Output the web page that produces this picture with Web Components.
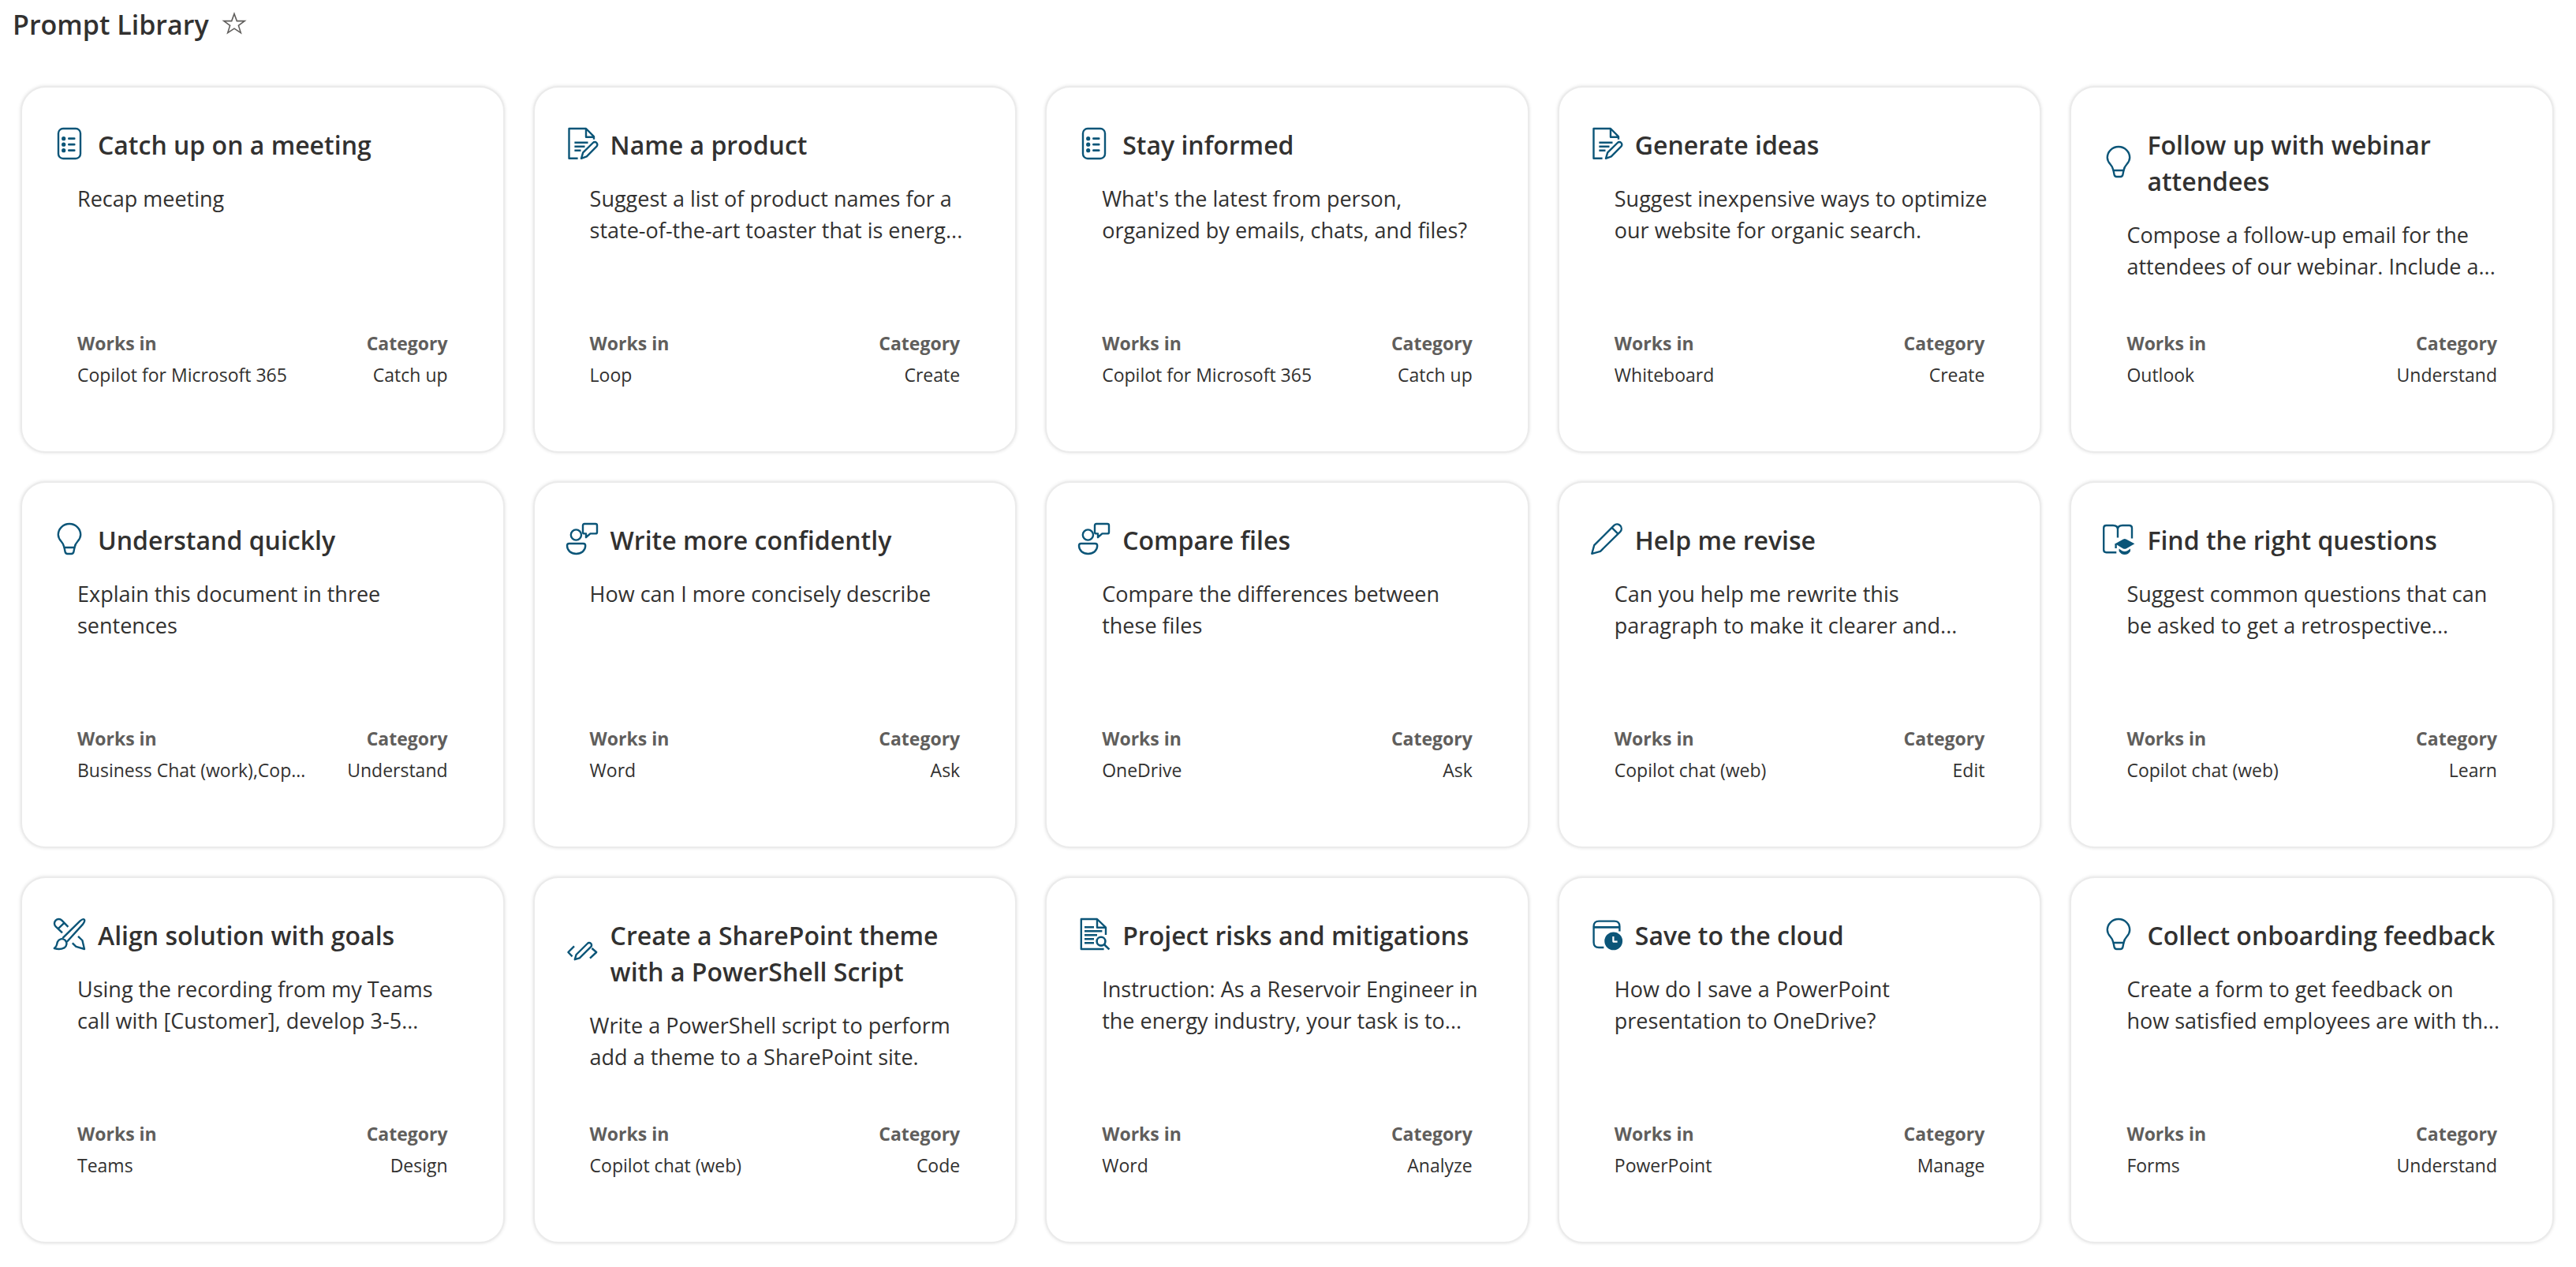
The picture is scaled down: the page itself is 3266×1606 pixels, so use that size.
<!DOCTYPE html>
<html lang="en">
<head>
<meta charset="utf-8">
<title>Prompt Library</title>
<style>
  :root {
    --ink: #323130;
    --ink-soft: #605e5c;
    --accent: #0b5578;
    --line: #ebebeb;
  }
  html { background: #fff; }
  body {
    margin: 0;
    color: var(--ink);
    font-family: "Segoe UI", "Open Sans", "Noto Sans", sans-serif;
  }
</style>
</head>
<body>
<prompt-library heading="Prompt Library">
  <prompt-card icon="list" app="Copilot for Microsoft 365" category="Catch up"><span slot="title">Catch up on a meeting</span>Recap meeting</prompt-card>
  <prompt-card icon="doc-edit" app="Loop" category="Create"><span slot="title">Name a product</span>Suggest a list of product names for a state-of-the-art toaster that is energ...</prompt-card>
  <prompt-card icon="list" app="Copilot for Microsoft 365" category="Catch up"><span slot="title">Stay informed</span>What's the latest from person, organized by emails, chats, and files?</prompt-card>
  <prompt-card icon="doc-edit" app="Whiteboard" category="Create"><span slot="title">Generate ideas</span>Suggest inexpensive ways to optimize our website for organic search.</prompt-card>
  <prompt-card icon="bulb" app="Outlook" category="Understand"><span slot="title">Follow up with webinar attendees</span>Compose a follow-up email for the attendees of our webinar. Include a...</prompt-card>

  <prompt-card icon="bulb" app="Business Chat (work),Cop..." category="Understand"><span slot="title">Understand quickly</span>Explain this document in three sentences</prompt-card>
  <prompt-card icon="person-chat" app="Word" category="Ask"><span slot="title">Write more confidently</span>How can I more concisely describe</prompt-card>
  <prompt-card icon="person-chat" app="OneDrive" category="Ask"><span slot="title">Compare files</span>Compare the differences between these files</prompt-card>
  <prompt-card icon="pencil" app="Copilot chat (web)" category="Edit"><span slot="title">Help me revise</span>Can you help me rewrite this paragraph to make it clearer and...</prompt-card>
  <prompt-card icon="learn" app="Copilot chat (web)" category="Learn"><span slot="title">Find the right questions</span>Suggest common questions that can be asked to get a retrospective...</prompt-card>

  <prompt-card icon="design" app="Teams" category="Design"><span slot="title">Align solution with goals</span>Using the recording from my Teams call with [Customer], develop 3-5...</prompt-card>
  <prompt-card icon="code" app="Copilot chat (web)" category="Code"><span slot="title">Create a SharePoint theme with a PowerShell Script</span>Write a PowerShell script to perform add a theme to a SharePoint site.</prompt-card>
  <prompt-card icon="doc-search" app="Word" category="Analyze"><span slot="title">Project risks and mitigations</span>Instruction: As a Reservoir Engineer in the energy industry, your task is to...</prompt-card>
  <prompt-card icon="schedule" app="PowerPoint" category="Manage"><span slot="title">Save to the cloud</span>How do I save a PowerPoint presentation to OneDrive?</prompt-card>
  <prompt-card icon="bulb" app="Forms" category="Understand"><span slot="title">Collect onboarding feedback</span>Create a form to get feedback on<br>how satisfied employees are with th...</prompt-card>
</prompt-library>

<script>
const ICONS = {
  'list': `
    <rect x="6" y="1" width="28" height="38" rx="6"/>
    <g class="fill"><circle cx="12.7" cy="13.7" r="2.6"/><circle cx="12.7" cy="21.2" r="2.6"/><circle cx="12.7" cy="28.7" r="2.6"/></g>
    <path stroke-width="2.8" stroke-linecap="round" d="M19.4 13.7h6.8M19.4 21.2h6.8M19.4 28.7h6.8"/>`,
  'doc-edit': `
    <path d="M14.6 38.8H3.5V1H25L35 11.2V14.8M25 1V11.8H35"/>
    <path d="M10.4 18.8H27.5M10.4 23.8H23.5M10.4 28.8H18.5"/>
    <path d="M19 38.8L21.2 31.4L33.8 19A3.2 3.2 0 0 1 38.4 23.6L25.8 36.4Z"/>`,
  'bulb': `
    <path d="M13.5 31C12.9 27.2 11.8 25.6 9.6 23.2C7 20.4 5.8 17.6 5.8 14.8A14.2 13.8 0 0 1 34.2 14.8C34.2 17.6 33 20.4 30.4 23.2C28.2 25.6 27.1 27.2 26.5 31Z"/>
    <path d="M13.5 31L14.6 36.6Q15.1 39 17.5 39H22.5Q24.9 39 25.4 36.6L26.5 31"/>`,
  'person-chat': `
    <ellipse cx="12.4" cy="15" rx="6.6" ry="6.6"/>
    <path d="M3.4 26H21.6Q24.2 26 24.2 28.8C24.2 35 19 39 12.6 39S1 35 1 28.8Q1 26 3.4 26Z"/>
    <path d="M23 1H37Q39 1 39 3V11.4Q39 13.4 37 13.4H30.4L25 18.2V13.4H23Q21 13.4 21 11.4V3Q21 1 23 1Z"/>`,
  'pencil': `
    <path d="M1.3 38.8L4.2 28.2L29.5 2.9A5.6 5.6 0 0 1 37.4 10.8L12 35.9ZM26.6 5.8L34.4 13.6"/>`,
  'learn': `
    <path d="M17.3 37.2H4.5Q1.2 37.2 1.2 34V6.2Q1.2 3 4.5 3H13Q19 3 19 8V18.6M19 8Q19 3 25 3H33.6Q37 3 37 6.4V19.5"/>
    <path d="M16.6 26V32"/>
    <g class="fill"><path d="M15.7 26.2L26 20.4Q27.7 19.5 29.6 20.4L40.4 26.2L29.6 32.4Q27.7 33.3 26 32.4Z"/><path d="M20.6 32.4L24.6 35.2Q27.7 36.6 31 35.2L35 32.4V35.8Q32.4 40 27.8 40T20.6 35.8Z"/></g>`,
  'design': `
    <path d="M11.4 25.2L33.5 3.4Q37.2 .2 38.8 1.6Q40.2 3.4 37.2 7.4L16.9 29.8"/>
    <path d="M.8 38C5 35.4 3.5 33.2 5 29.8C6.6 26 11 25 14.5 27.6C17.5 30.6 17 35 13.5 37.4C9.5 39.6 5 39.4 .8 38Z"/>
    <path d="M11 18.4L2.6 10.4A5.5 5.5 0 0 1 10.4 2.6L18.4 10.8M5.8 13.2L13.4 5.8"/>
    <path d="M23.8 31.4L28.4 35.8L39 39L36.4 28L31 22.9"/>`,
  'code': `
    <path d="M10 12.4L2.4 20L7.6 25.4M32.4 15L38.2 20L30 27.6"/>
    <path d="M10.8 29.2L12.6 23L26.8 9A2.9 2.9 0 0 1 31.2 13.2L16.8 27.3Z"/>`,
  'doc-search': `
    <path d="M32.6 39H3.8V1H24L35 11.6V21M24 1V11.8H35"/>
    <path stroke-width="2.6" d="M8 11.2H20M8 16.2H30.4M8 21.2H24M8 26.2H20M8 31.2H20"/>
    <circle cx="29" cy="29.2" r="5.4" stroke-width="2.6"/><path stroke-width="2.6" d="M33 33.2L39.4 39.4"/>`,
  'schedule': `
    <path d="M16.4 37H10.2Q3.6 37 3.6 30.4V10.2Q3.6 3.6 10.2 3.6H29.8Q36.4 3.6 36.4 10.2V16.6"/>
    <path stroke-width="2.8" d="M3.6 11.3H36.4"/>
    <circle class="fill" cx="28.7" cy="28.9" r="11.4"/>
    <path stroke="#fff" stroke-width="2.2" d="M28.4 23V29.6H33.6"/>`
};

function attach(host, html) {
  const t = document.createElement('template');
  t.innerHTML = html;
  host.attachShadow({ mode: 'open' }).append(t.content.cloneNode(true));
}

class PromptIcon extends HTMLElement {
  constructor() { super(); attach(this, ''); }
  connectedCallback() {
    this.shadowRoot.innerHTML = `
      <style>
        :host { display: block; flex: none; width: 40px; height: 40px; color: var(--accent); }
        svg { display: block; overflow: visible; fill: none; stroke: currentColor; stroke-width: 2.4; stroke-linejoin: round; }
        .fill { fill: currentColor; stroke: none; }
      </style>
      <svg width="40" height="40" viewBox="0 0 40 40" aria-hidden="true">${ICONS[this.getAttribute('name')] || ''}</svg>`;
  }
}
customElements.define('prompt-icon', PromptIcon);

class PromptMeta extends HTMLElement {
  constructor() {
    super();
    attach(this, `
      <style>
        :host { display: block; font-size: 23px; line-height: 40px; white-space: nowrap; }
        dl { display: flex; justify-content: space-between; gap: 20px; margin: 0; }
        div:last-child { text-align: right; }
        dt { font-weight: 700; color: var(--ink-soft); }
        dd { margin: 0; }
      </style>
      <dl>
        <div><dt>Works in</dt><dd><slot name="app"></slot></dd></div>
        <div><dt>Category</dt><dd><slot name="category"></slot></dd></div>
      </dl>`);
  }
}
customElements.define('prompt-meta', PromptMeta);

class PromptCard extends HTMLElement {
  constructor() {
    super();
    attach(this, `
      <style>
        :host { display: block; }
        article {
          display: flex; flex-direction: column; box-sizing: border-box;
          min-height: 465px; height: 100%; padding: 46px 32px 77px 40px;
          border: 2px solid var(--line); border-radius: 32px;
          background: #fff; box-shadow: 0 0 4px rgba(0, 0, 0, .12);
        }
        header { display: flex; align-items: center; gap: 16px; }
        h2 { margin: 0; padding-top: 4px; font-size: 32px; line-height: 46px; font-weight: 600; }
        p { margin: 25px 24px 0 30px; font-size: 27px; line-height: 40px; }
        prompt-meta { margin: auto 38px 0 30px; }
      </style>
      <article>
        <header><prompt-icon></prompt-icon><h2><slot name="title"></slot></h2></header>
        <p><slot></slot></p>
        <prompt-meta><span slot="app"></span><span slot="category"></span></prompt-meta>
      </article>`);
  }
  connectedCallback() {
    const root = this.shadowRoot;
    const icon = document.createElement('prompt-icon');
    icon.setAttribute('name', this.getAttribute('icon'));
    root.querySelector('prompt-icon').replaceWith(icon);
    root.querySelector('[slot=app]').textContent = this.getAttribute('app');
    root.querySelector('[slot=category]').textContent = this.getAttribute('category');
  }
}
customElements.define('prompt-card', PromptCard);

class PromptLibrary extends HTMLElement {
  constructor() {
    super();
    attach(this, `
      <style>
        :host { display: block; }
        header { display: flex; align-items: center; gap: 16px; padding: 7px 16px 0; }
        h1 { margin: 0; font-size: 34px; line-height: 48px; font-weight: 600; }
        button { display: block; padding: 0; border: 0; background: none; color: #605e5c; cursor: pointer; }
        svg { display: block; }
        main {
          display: grid; grid-template-columns: repeat(5, minmax(0, 1fr)); gap: 36px;
          padding: 54px 28px 32px 26px;
        }
      </style>
      <header>
        <h1></h1>
        <button type="button" aria-label="Add to favorites">
          <svg width="32" height="32" viewBox="0 0 32 32" fill="none" stroke="currentColor" stroke-width="1.6"><path d="M16 2.4L19.3 11.6H29.2L21.4 17.4L24.3 26.6L16 21.2L7.7 26.6L10.6 17.4L2.8 11.6H12.7Z"/></svg>
        </button>
      </header>
      <main><slot></slot></main>`);
  }
  connectedCallback() {
    this.shadowRoot.querySelector('h1').textContent = this.getAttribute('heading');
  }
}
customElements.define('prompt-library', PromptLibrary);
</script>
</body>
</html>
